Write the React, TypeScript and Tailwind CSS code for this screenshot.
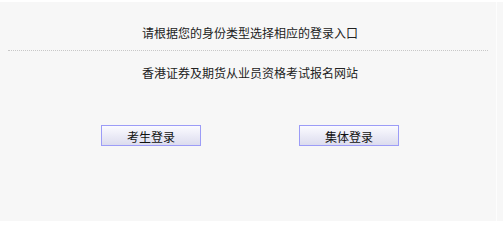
import React from "react";

export default function App() {
  return (
    <div className="w-[503px] h-[221px] overflow-hidden bg-[#f7f7f7] border-t-[2px] border-white flex" style={{ fontFamily: '"Noto Sans CJK SC", "Noto Sans", sans-serif' }}>
      <div className="w-[497px] h-[219px] flex flex-col items-center text-[12px] text-[#222] leading-none border-r border-[#fdfdfd]">
        <div className="mt-[25px] h-[12px] pl-[4px]">请根据您的身份类型选择相应的登录入口</div>
        <div className="mt-[11px] w-[480px] border-t border-dotted border-[#c8c8c8]"></div>
        <div className="mt-[16px] h-[12px] pl-[4px]">香港证券及期货从业员资格考试报名网站</div>
        <div className="mt-[46px] flex gap-[98px] pl-[4px]">
          <button className="w-[100px] h-[21px] border border-[#9c9cf7] bg-gradient-to-b from-[#fbfbff] to-[#dcdcee] text-[12px] text-[#111] pt-[3px] leading-none">考生登录</button>
          <button className="w-[100px] h-[21px] border border-[#9c9cf7] bg-gradient-to-b from-[#fbfbff] to-[#dcdcee] text-[12px] text-[#111] pt-[3px] leading-none">集体登录</button>
        </div>
      </div>
    </div>
  );
}
